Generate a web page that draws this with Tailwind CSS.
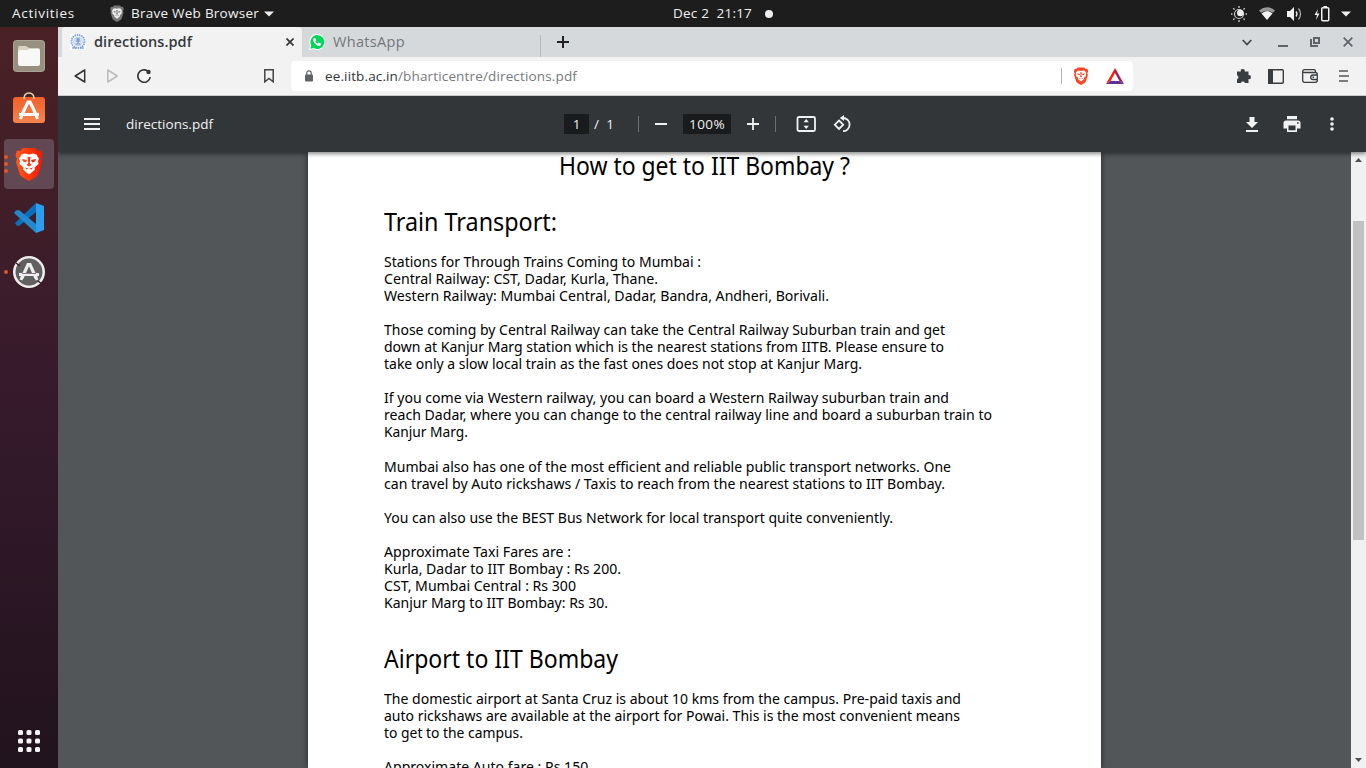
<!DOCTYPE html>
<html lang="en">
<head>
<meta charset="utf-8">
<title>directions.pdf</title>
<script src="https://cdn.jsdelivr.net/npm/@tailwindcss/browser@4"></script>
</head>
<body class="w-[1366px] h-[768px] overflow-hidden bg-[#525659] font-['Open_Sans',sans-serif] flex flex-col">
<svg width="0" height="0" class="absolute">
  <symbol id="lion" viewBox="0 0 28 34">
    <path d="M8 1h12l3 3 3-.5 1.500 5L26 12l1 3-4 13-3 2.500-6 3.500-6-3.500L5 28 1 15l1-3L.500 8.500 2 3.500 5 4z"/>
    <path fill="var(--face,#fff)" d="M14 7.500l4-1 3.500 1 2.500 4.500-1 2 .5 3-4 3.500.5 2-3.500 3-2.500 2-2.500-2L8 22.500l.5-2-4-3.500.5-3-1-2 2.500-4.500 3.500-1z"/>
    <path d="M7 12l5 1-1 2.500-3-1zM21 12l-5 1 1 2.500 3-1zM12.500 10h3l-.8 6 1.800 2-2.500 1.500-2.500-1.500 1.800-2zM10 20.500l4 1.300 4-1.300-1.500 2-2.500-.8-2.500.8z"/>
  </symbol>
</svg>

<!-- system bar -->
<header class="h-[27px] shrink-0 bg-[#1d1d1d] text-[#f2f2f2] flex items-center text-[13.500px] leading-none">
  <div class="w-[98px] pl-3"><span data-w="63">Activities</span></div>
  <svg class="ml-[12px] w-[14px] h-[17px] fill-[#777] [--face:#eee]"><use href="#lion"/></svg>
  <div class="ml-[7px] w-[128px]"><span data-w="128">Brave Web Browser</span></div>
  <svg class="ml-[5px] w-[10px] h-[6px]" viewBox="0 0 10 6"><path fill="#eee" d="M0 .5h10L5 5.500z"/></svg>
  <div class="ml-[399px] w-[80px]"><span class="whitespace-pre" data-w="79">Dec 2  21:17</span></div>
  <span class="ml-[12px] size-2 rounded-full bg-[#eee]"></span>
  <svg class="ml-[458px] w-4 h-4" viewBox="0 0 16 16"><g fill="none" stroke="#ccc"><circle cx="8" cy="8" r="4.500" stroke-width="1.200"/><path stroke-width="1.300" d="M8 0v2M8 14v2M0 8h1.500M14.500 8H16M2.300 2.300l1.200 1.200M12.500 12.500l1.200 1.200M2.300 13.700l1.200-1.200M12.500 3.500l1.200-1.200"/></g><circle cx="9.300" cy="7" r="3.300" fill="#eee"/></svg>
  <svg class="ml-[12px] w-[16px] h-[13px]" viewBox="0 0 16 13"><path fill="#999" d="M0 3.500Q8-3 16 3.500l-2 2.300Q8 1.500 2 5.800z"/><path fill="#f2f2f2" d="M2.500 6.500Q8 1.500 13.500 6.500L8 13z"/></svg>
  <svg class="ml-[12px] w-[16px] h-[14px]" viewBox="0 0 16 14"><path fill="#f2f2f2" d="M0 4h3l4-4v14l-4-4H0z"/><path fill="none" stroke="#eee" stroke-width="1.300" d="M9 4.500q2 2.500 0 5"/><path fill="none" stroke="#aaa" stroke-width="1.300" d="M11.500 1.500q4 5.500 0 11"/></svg>
  <svg class="ml-[11px] w-[16px] h-[16px]" viewBox="0 0 16 16"><path fill="#f2f2f2" d="M4 3L.5 9H3l-1 5 3.500-6.500H3z"/><rect x="7.750" y="1.750" width="7" height="13" rx="1" fill="none" stroke="#f2f2f2" stroke-width="1.500"/><path fill="#f2f2f2" d="M9.500 0h3.500v2H9.500z"/></svg>
  <svg class="ml-[11px] w-[10px] h-[6px]" viewBox="0 0 10 6"><path fill="#eee" d="M0 .5h10L5 5.500z"/></svg>
</header>

<div class="flex h-[741px]">
  <!-- dock -->
  <nav class="w-[58px] shrink-0 bg-linear-to-b from-[#4a2125] via-[#361a2c] to-[#21131d] flex flex-col items-center pt-[13px]">
    <svg class="size-8" viewBox="0 0 32 32"><rect width="32" height="32" rx="4" fill="#aaa393"/><rect x="1" y="1" width="30" height="30" rx="3" fill="#979080"/><path d="M5 8q0-2 2-2h6l3 2h9q2 0 2 2v3H5z" fill="#d9d3c4"/><path d="M5 12q0-2 2-2h7l2-1h9q2 0 2 2v12q0 3-2 3H7q-2 0-2-3z" fill="#f8f8f7"/></svg>
    <svg class="mt-[20px] w-8 h-[32px]" viewBox="0 0 32 32"><defs><linearGradient id="og" x2="0" y2="1"><stop stop-color="#f1602b"/><stop offset="1" stop-color="#f5834f"/></linearGradient></defs><rect y="5" width="32" height="26" rx="3" fill="url(#og)"/><path fill="none" stroke="#e8d5b0" stroke-width="1.500" d="M11 7q0-6 5-6t5 6"/><path fill="none" stroke="#fff" stroke-width="3.200" d="M9.500 21.500L15 10h2l5.500 11.500M6 22.500h20"/><path stroke="#fff" stroke-width="3" d="M9 23l-1.500 4M23 23l1.500 4"/></svg>
    <div class="mt-[15px] w-[50px] h-[50px] rounded-[4px] bg-[#624853] flex items-center">
      <div class="flex flex-col gap-[3px]"><i class="size-1 rounded-full bg-[#e95420]"></i><i class="size-1 rounded-full bg-[#e95420]"></i><i class="size-1 rounded-full bg-[#e95420]"></i></div>
      <svg class="ml-[7px] w-[28px] h-[34px]" viewBox="0 0 28 34"><defs><linearGradient id="bg"><stop stop-color="#ff5a18"/><stop offset="1" stop-color="#f81500"/></linearGradient></defs><use href="#lion" width="28" height="34" fill="url(#bg)"/></svg>
    </div>
    <svg class="mt-[14px] w-[30px] h-[30px]" viewBox="0 0 30 30"><path fill="#0b70bb" d="M22 0L1 20l1.500 2.500L5 23 22 9z"/><path fill="#2489ca" d="M22 30L0 10l2-2.500L5 7l17 14z"/><path fill="#2b9ef0" d="M22 0l8 3v24l-8 3z"/></svg>
    <div class="mt-[23px] w-full h-8 flex items-center">
      <i class="ml-1 size-1 rounded-full bg-[#e95420]"></i>
      <svg class="ml-[5px] size-8" viewBox="0 0 32 32"><circle cx="16" cy="16" r="13.500" fill="#606060"/><circle cx="16" cy="16" r="14.700" fill="none" stroke="#eee" stroke-width="2.600"/><path stroke="#3a1b2b" stroke-width="1.500" d="M3 7l4 3M25 25l4 3"/><path fill="none" stroke="#eee" stroke-width="3.200" d="M9 22L15 8.500h2L23 22M6 18.500h20"/><path stroke="#867386" d="M9 17.500h14"/><path stroke="#eee" stroke-width="3" d="M9.500 20l-1.500 4M22.500 20l1.500 4"/></svg>
    </div>
    <svg class="mt-auto mb-[16px] size-[22px]" viewBox="0 0 22 22" fill="#f4f4f4"><g id="r"><rect width="5" height="5" rx="1.500"/><rect x="8.500" width="5" height="5" rx="1.500"/><rect x="17" width="5" height="5" rx="1.500"/></g><use href="#r" y="8.500"/><use href="#r" y="17"/></svg>
  </nav>

  <main class="flex-1 min-w-0 flex flex-col">
    <!-- tab strip -->
    <div class="h-[30px] shrink-0 bg-[#d5d9dc] flex items-center leading-none text-[14.500px] text-[#35393d]">
      <div class="ml-1 w-[240px] h-full rounded-t-[4px] bg-[#f2f2f2] flex items-center">
        <svg class="ml-2 size-4" viewBox="0 0 16 16"><rect width="16" height="16" fill="#fff"/><circle cx="8" cy="7.500" r="6.500" fill="none" stroke="#82a5d8" stroke-width="2" stroke-dasharray="1.500 .7"/><circle cx="8" cy="7.500" r="4.300" fill="#e5edf8" stroke="#9ab5df" stroke-width=".7"/><path stroke="#5f88c8" d="M6 5h4M5.500 7h5M8 4v6M5.500 10h5M2 14h4M10 14h4"/></svg>
        <div class="ml-2 w-[98px]"><span class="font-semibold" data-w="98">directions.pdf</span></div>
        <svg class="ml-[94px] size-[8px]" viewBox="0 0 8 8"><path stroke="#333" stroke-width="1.700" d="M.5.500l7 7M7.500.500l-7 7"/></svg>
      </div>
      <svg class="ml-[7px] size-4" viewBox="0 0 16 16"><path fill="#fff" d="M8 0a8 8 0 1 1-3.500 15L0 16l1-4.500A8 8 0 0 1 8 0z"/><path fill="#00d757" d="M8 1a7 7 0 1 1-3.300 13L1.300 14.700l1-3.200A7 7 0 0 1 8 1z"/><path fill="#fff" d="M5 4l1.200 0 1 2.300-.8 1.100q.9 1.500 2.400 2.200l1-1 2.200 1v1q-.6 1.400-2.100 1.300Q5.500 11 4.200 6.500 4 4.800 5 4z"/></svg>
      <div class="ml-2 w-[72px] text-[#74777a]"><span data-w="72">WhatsApp</span></div>
      <div class="ml-[135px] mt-2 w-px h-[22px] bg-[#b6babd]"></div>
      <svg class="ml-[16px] size-3" viewBox="0 0 12 12"><path stroke="#222" stroke-width="2" d="M6 0v12M0 6h12"/></svg>
      <svg class="ml-auto w-[10px] h-[7px]" viewBox="0 0 10 7"><path fill="none" stroke="#444" stroke-width="1.700" d="M.7 1L5 5.500 9.300 1"/></svg>
      <svg class="ml-[26px] mt-2 w-[10px] h-[2px]"><rect width="10" height="2" fill="#5f6368"/></svg>
      <svg class="ml-[22px] size-[10px]" viewBox="0 0 10 10"><path fill="none" stroke="#5f6368" stroke-width="2" d="M4 1h5v5H4zM1 2v7h7"/></svg>
      <svg class="ml-[23px] mr-[13px] size-[10px]" viewBox="0 0 10 10"><path stroke="#5f6368" stroke-width="1.700" d="M.7.700l8.600 8.600M9.300.700L.7 9.300"/></svg>
    </div>

    <!-- address bar -->
    <div class="h-[39px] shrink-0 bg-[#f2f2f2] border-b border-[#c9cbcd] flex items-center leading-none">
      <svg class="ml-4 w-[12px] h-[14px]" viewBox="0 0 12 14"><path fill="none" stroke="#333" stroke-width="1.500" stroke-linejoin="round" d="M10.700 1v12L1.200 7z"/></svg>
      <svg class="ml-[21px] w-[11px] h-[14px]" viewBox="0 0 11 14"><path fill="none" stroke="#bbb" stroke-width="1.500" stroke-linejoin="round" d="M.8 1v12l9.500-6z"/></svg>
      <svg class="ml-[19px] size-[14px]" viewBox="0 0 14 14"><path fill="none" stroke="#333" stroke-width="1.600" d="M13.200 8A6.200 6.200 0 1 1 10.500 1.900"/><circle cx="11.500" cy="3" r="2.200" fill="#333"/></svg>
      <svg class="ml-[113px] w-[10px] h-[14px]" viewBox="0 0 10 14"><path fill="none" stroke="#444" stroke-width="1.500" d="M.8.800h8.400v12L5 9.500.8 12.800z"/></svg>
      <div class="ml-[17px] w-[842px] h-[30px] rounded-[4px] bg-white flex items-center text-[13.500px] text-[#303438]">
        <svg class="ml-[14px] w-[8px] h-[12px]" viewBox="0 0 8 12"><path fill="none" stroke="#5f6368" stroke-width="1.200" d="M1.800 5V3Q1.800.800 4 .800T6.200 3v2"/><rect y="4.500" width="8" height="7" rx="1" fill="#5f6368"/></svg>
        <div class="ml-[12px] pt-[2px] w-[252px] whitespace-nowrap"><span data-w="73">ee.iitb.ac.in</span><span class="text-[#777a7d]" data-w="179">/bharticentre/directions.pdf</span></div>
        <div class="ml-[484px] w-px h-4 bg-[#b5b5b5]"></div>
        <svg class="ml-[11px] w-4 h-[18px] fill-[#fb4422]"><use href="#lion"/></svg>
        <svg class="ml-[17px] w-[18px] h-[16px]" viewBox="0 0 18 16"><path fill="#ff1c00" d="M9 0L0 16l4.500-3L9 5z"/><path fill="#9e1f63" d="M9 0l9 16-4.500-3L9 5z"/><path fill="#662d91" d="M0 16h18l-4.500-3h-9z"/></svg>
      </div>
      <svg class="ml-auto w-[15px] h-[15px]" viewBox="0 0 15 15"><path fill="#3a3d40" d="M1 2.500h3.800a2 2 0 1 1 3.900 0H12.500v3.700a2 2 0 1 1 0 3.900V14H8.900a2.100 2.100 0 0 0-4 0H1v-3.800a2.100 2.100 0 0 0 0-4z"/></svg>
      <svg class="ml-[17px] w-4 h-[15px]" viewBox="0 0 16 15"><rect x=".7" y=".7" width="14.600" height="13.600" rx="1" fill="none" stroke="#3a3d40" stroke-width="1.400"/><path fill="#3a3d40" d="M0 0h5v15H0z"/></svg>
      <svg class="ml-[18px] w-4 h-[14px]" viewBox="0 0 16 14"><path fill="none" stroke="#3a3d40" stroke-width="1.300" d="M.7 2.500Q.7.700 2.500.700H12q1.500 0 1.500 2.300M.7 2.500Q1 3.500 2.500 3.500h10.800q2 0 2 2v6q0 1.800-2 1.800H2.500q-1.800 0-1.800-1.800zM15.300 6H11a2.200 2.200 0 0 0 0 4.500h4.300"/><path fill="#3a3d40" d="M10.500 7.500h1.500V9h-1.500z"/></svg>
      <svg class="ml-[21px] mr-[17px] w-[10px] h-[12px]" viewBox="0 0 10 12"><path stroke="#555" stroke-width="1.600" d="M0 1h9M0 6h10M0 11h9"/></svg>
    </div>

    <!-- PDF toolbar -->
    <div class="h-14 shrink-0 relative z-10 bg-[#323639] text-[#f1f1f1] flex items-center text-[13.500px] leading-none shadow-[0_2px_4px_rgba(0,0,0,.45)] [clip-path:inset(0_0_-8px_0)]">
      <svg class="ml-[26px] w-4 h-3" viewBox="0 0 16 12"><path fill="#f1f1f1" d="M0 0h16v2H0zM0 5h16v2H0zM0 10h16v2H0z"/></svg>
      <div class="ml-[26px] pt-[2px] w-[87px]"><span data-w="87">directions.pdf</span></div>
      <div class="ml-[351px] w-[25px] h-5 pt-[2px] bg-[#191b1c] flex items-center justify-center">1</div>
      <div class="ml-[5px] pt-[2px] w-[20px] whitespace-pre"><span data-w="20">/  1</span></div>
      <div class="ml-[24px] w-px h-4 bg-[#6d7073]"></div>
      <div class="ml-[16px] w-3 h-[2px] bg-[#f1f1f1]"></div>
      <div class="ml-[16px] w-12 h-5 pt-[2px] bg-[#191b1c] flex items-center pl-[6px]"><span data-w="36">100%</span></div>
      <svg class="ml-[16px] size-3" viewBox="0 0 12 12"><path stroke="#f1f1f1" stroke-width="1.800" d="M6 0v12M0 6h12"/></svg>
      <div class="ml-[16px] w-px h-4 bg-[#6d7073]"></div>
      <svg class="ml-[20px] w-5 h-4" viewBox="0 0 20 16"><rect x="1.500" y="1" width="17.500" height="14" rx="1.500" fill="none" stroke="#f1f1f1" stroke-width="1.800"/><path fill="#f1f1f1" d="M10.200 3l2.700 3.200H7.500zM10.200 13l2.700-3.200H7.500z"/></svg>
      <svg class="ml-[17px] w-[19px] h-[18px]" viewBox="0 0 19 18"><path fill="none" stroke="#f1f1f1" stroke-width="1.800" d="M6 5.500l4.200 4.200L6 13.900 1.800 9.700zM10 3a6.600 6.600 0 1 1 0 13.200"/><path fill="#f1f1f1" d="M11 0v6L6.800 3z"/></svg>
      <svg class="ml-auto w-3 h-[15px]" viewBox="0 0 12 15"><path fill="#f1f1f1" d="M3.500 0h5v5H12l-6 6-6-6h3.500zM0 13h12v2H0z"/></svg>
      <svg class="ml-[25px] w-[18px] h-4" viewBox="0 0 18 16"><path fill="#f1f1f1" d="M4 0h10v3.300H4zM3 4.500h12q2.500 0 2.500 2.500v5.500H14V16H4v-3.500H.5V7Q.5 4.500 3 4.500z"/><path fill="#323639" d="M5.500 9.500h7v4.800h-7zM14 6.200h1.600v1.600H14z"/></svg>
      <svg class="ml-[29px] mr-[32px] w-1 h-[14px]" viewBox="0 0 4 14" fill="#f1f1f1"><circle cx="2" cy="2" r="1.800"/><circle cx="2" cy="7" r="1.800"/><circle cx="2" cy="12" r="1.800"/></svg>
    </div>

    <!-- document -->
    <div class="flex-1 min-h-0 overflow-hidden flex">
      <article class="ml-[250px] w-[793px] bg-white shadow-[0_0_6px_rgba(0,0,0,.6)] pl-[76px] text-black text-[14.4px] leading-[17.07px] whitespace-nowrap font-['Noto_Sans',sans-serif] [&_span]:inline-block [&_span]:origin-left [&_span]:align-top">
        <h1 class="-mt-[2.6px] pl-[175px] text-[24.7px] leading-[34px] h-[34px]"><span data-w="291">How to get to IIT Bombay ?</span></h1>
        <h2 class="mt-[22px] text-[24.7px] leading-[34px] h-[34px]"><span data-w="173">Train Transport:</span></h2>
        <div class="mt-[13.4px] flex flex-col gap-[17.07px]">
          <p><span data-w="317">Stations for Through Trains Coming to Mumbai :</span><br><span data-w="274">Central Railway: CST, Dadar, Kurla, Thane.</span><br><span data-w="445">Western Railway: Mumbai Central, Dadar, Bandra, Andheri, Borivali.</span></p>
          <p><span data-w="561">Those coming by Central Railway can take the Central Railway Suburban train and get</span><br><span data-w="560">down at Kanjur Marg station which is the nearest stations from IITB. Please ensure to</span><br><span data-w="478">take only a slow local train as the fast ones does not stop at Kanjur Marg.</span></p>
          <p><span data-w="565">If you come via Western railway, you can board a Western Railway suburban train and</span><br><span data-w="608">reach Dadar, where you can change to the central railway line and board a suburban train to</span><br><span data-w="84">Kanjur Marg.</span></p>
          <p><span data-w="567">Mumbai also has one of the most efficient and reliable public transport networks. One</span><br><span data-w="561">can travel by Auto rickshaws / Taxis to reach from the nearest stations to IIT Bombay.</span></p>
          <p><span data-w="509">You can also use the BEST Bus Network for local transport quite conveniently.</span></p>
          <p><span data-w="187">Approximate Taxi Fares are :</span><br><span data-w="237">Kurla, Dadar to IIT Bombay : Rs 200.</span><br><span data-w="192">CST, Mumbai Central : Rs 300</span><br><span data-w="224">Kanjur Marg to IIT Bombay: Rs 30.</span></p>
        </div>
        <h2 class="mt-[31.2px] text-[24.7px] leading-[34px] h-[34px]"><span data-w="234">Airport to IIT Bombay</span></h2>
        <div class="mt-[13.4px] flex flex-col gap-[17.07px]">
          <p><span data-w="577">The domestic airport at Santa Cruz is about 10 kms from the campus. Pre-paid taxis and</span><br><span data-w="576">auto rickshaws are available at the airport for Powai. This is the most convenient means</span><br><span data-w="139">to get to the campus.</span></p>
          <p><span data-w="208">Approximate Auto fare : Rs 150.</span></p>
        </div>
      </article>
      <div class="ml-auto w-[15px] bg-[#f1f1f1] flex flex-col items-center">
        <svg class="mt-[6px] w-[7px] h-1" viewBox="0 0 7 4"><path fill="#505050" d="M3.500 0L7 4H0z"/></svg>
        <div class="mt-[59px] w-[11px] h-[319px] bg-[#c1c1c1]"></div>
        <svg class="mt-auto mb-[6px] w-[7px] h-1" viewBox="0 0 7 4"><path fill="#505050" d="M0 0h7L3.500 4z"/></svg>
      </div>
    </div>
  </main>
</div>
<script>
  // Fit each line of text to its set measure: the document's lines are
  // condensed, the browser's labels are tracked.
  function fit() {
    document.querySelectorAll('[data-w]').forEach(function (el) {
      el.style.whiteSpace = 'pre';
      el.style.letterSpacing = '0px';
      el.style.transform = 'none';
      var natural = el.getBoundingClientRect().width;
      if (el.closest('article')) {
        el.style.transform = 'scaleX(' + el.dataset.w / natural + ')';
      } else {
        el.style.letterSpacing = (el.dataset.w - natural) / el.textContent.length + 'px';
      }
    });
  }
  fit();
  window.addEventListener('load', function () { fit(); requestAnimationFrame(fit); });
  document.fonts.ready.then(fit);
</script>
</body>
</html>
